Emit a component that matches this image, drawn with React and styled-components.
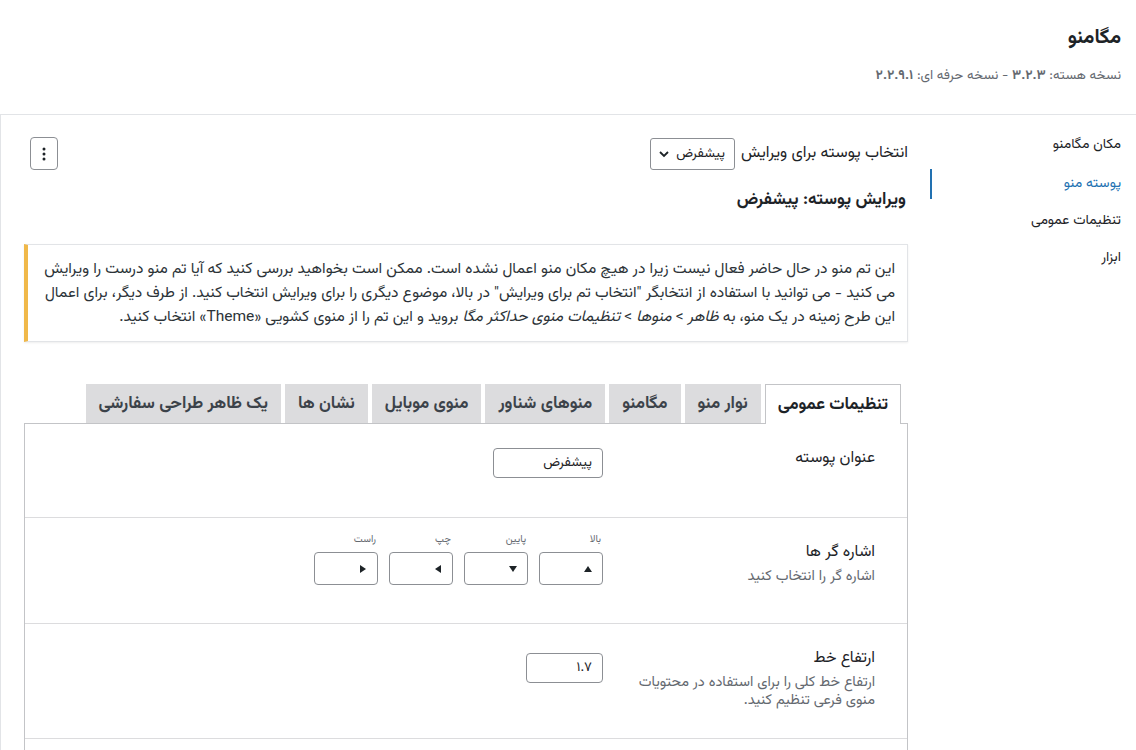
import React from 'react'
import styled, { createGlobalStyle } from 'styled-components'

const GlobalStyle = createGlobalStyle`
    html, body {
        margin: 0;
        padding: 0;
        background: #fff;
    }
    body {
        font-family: "Vazirmatn", "Noto Sans Arabic", "DejaVu Sans", sans-serif;
        color: #1d2327;
        font-size: 14px;
    }
`

const Page = styled.div`
    direction: rtl;
    width: 1136px;
    min-height: 750px;
    overflow: hidden;
`
const Header = styled.header`
    height: 115px;
    box-sizing: border-box;
    padding: 25px 15px 0;
    border-bottom: 1px solid #e2e4e7;
`
const Title = styled.h1`
    margin: 0;
    font-size: 20px;
    line-height: 26px;
    font-weight: 700;
`
const Version = styled.p`
    margin: 15px 0 0;
    font-size: 13.5px;
    line-height: 20px;
    color: #646970;
    b { font-weight: 700; }
`
const Body = styled.div`
    display: flex;
    align-items: stretch;
`
const Sidebar = styled.nav`
    width: 206px;
    flex: none;
    padding-top: 15px;
    box-sizing: border-box;
`
const NavItem = styled.a`
    display: block;
    height: 30px;
    line-height: 30px;
    margin-bottom: ${p => p.$gap || 7}px;
    padding-right: 15px;
    font-size: 14px;
    color: ${p => p.$active ? '#2271b1' : '#1d2327'};
    border-left: 2px solid ${p => p.$active ? '#2271b1' : 'transparent'};
    text-decoration: none;
`
const Content = styled.main`
    flex: 1;
    padding: 22px 22px 0 23px;
    border-left: 1px solid #e2e4e7;
    min-width: 0;
`
const TopBar = styled.div`
    display: flex;
    justify-content: space-between;
    align-items: center;
`
const PickGroup = styled.label`
    display: flex;
    align-items: center;
    gap: 6px;
    font-size: 16px;
`
const Select = styled.div`
    height: 32px;
    box-sizing: border-box;
    border: 1px solid #8c8f94;
    border-radius: 3px;
    display: flex;
    align-items: center;
    gap: 6px;
    padding: 0 9px 0 7px;
    font-size: 13.5px;
`
const MoreButton = styled.button`
    width: 28px;
    height: 33px;
    margin-left: 6px;
    background: #fff;
    border: 1px solid #8c8f94;
    border-radius: 4px;
    display: flex;
    align-items: center;
    justify-content: center;
    padding: 0;
`
const EditTitle = styled.h2`
    margin: 19px 2px 0 0;
    font-size: 17px;
    line-height: 22px;
    font-weight: 700;
`
const Notice = styled.div`
    margin-top: 33px;
    background: #fff;
    border: 1px solid #e2e4e7;
    border-left: 4px solid #f0b849;
    box-shadow: 0 1px 2px rgba(0, 0, 0, 0.07);
    padding: 12px 12px 12px 10px;
    font-size: 15.5px;
    line-height: 24px;
    color: #2c3338;
    p { margin: 0; }
`
const Tabs = styled.div`
    display: flex;
    gap: 4px;
    padding-right: 7px;
    margin-top: 42px;
    position: relative;
    z-index: 1;
`
const Tab = styled.div`
    box-sizing: border-box;
    padding: 0 12px;
    display: flex;
    align-items: center;
    font-size: 17px;
    font-weight: 700;
    border: 1px solid ${p => p.$active ? '#c3c4c7' : '#dcdcde'};
    border-bottom: none;
    background: ${p => p.$active ? '#fff' : '#dcdcde'};
    color: ${p => p.$active ? '#1d2327' : '#3c434a'};
    margin-bottom: -1px;
    height: ${p => p.$active ? 40 : 39}px;
`
const Table = styled.div`
    border: 1px solid #c3c4c7;
    border-bottom: none;
    background: #fff;
`
const Row = styled.div`
    display: grid;
    grid-template-columns: 255px 1fr;
    column-gap: 17px;
    align-items: start;
    height: ${p => p.$h}px;
    box-sizing: border-box;
    padding: 15px 32px 0;
    border-bottom: 1px solid #dcdcde;
`
const LabelCell = styled.div`
    padding-top: 9px;
`
const FieldTitle = styled.div`
    font-size: 16px;
    line-height: 22px;
    font-weight: 400;
`
const FieldDesc = styled.div`
    margin-top: 4px;
    font-size: 14.5px;
    line-height: 18px;
    color: #646970;
`
const Controls = styled.div`
    padding-top: ${p => p.$top || 0}px;
    display: flex;
    gap: 11px;
`
const TextInput = styled.div`
    width: ${p => p.$w}px;
    height: 30px;
    box-sizing: border-box;
    border: 1px solid #8c8f94;
    border-radius: 4px;
    padding: 0 10px;
    font-size: 13.5px;
    line-height: 28px;
`
const ArrowField = styled.div`
    display: flex;
    flex-direction: column;
    gap: 5px;
`
const ArrowLabel = styled.span`
    font-size: 10px;
    line-height: 14px;
    color: #646970;
    padding-right: 2px;
`
const ArrowBox = styled.div`
    width: 64px;
    height: 33px;
    box-sizing: border-box;
    border: 1px solid #8c8f94;
    border-radius: 4px;
    display: flex;
    align-items: center;
    padding-right: 10px;
`

const arrows = [
    { label: 'بالا', d: 'M4 1 L8 7 L0 7 Z' },
    { label: 'پایین', d: 'M0 1 L8 1 L4 7 Z' },
    { label: 'چپ', d: 'M1 4 L7 0 L7 8 Z' },
    { label: 'راست', d: 'M1 0 L7 4 L1 8 Z' },
]

const navItems = ['مکان مگامنو', 'پوسته منو', 'تنظیمات عمومی', 'ابزار']
const tabs = ['تنظیمات عمومی', 'نوار منو', 'مگامنو', 'منوهای شناور', 'منوی موبایل', 'نشان ها', 'یک ظاهر طراحی سفارشی']

export default function App() {
    return (
        <Page>
            <GlobalStyle />
            <Header>
                <Title>مگامنو</Title>
                <Version>نسخه هسته: <b>۳.۲.۳</b> - نسخه حرفه ای: <b>۲.۲.۹.۱</b></Version>
            </Header>
            <Body>
                <Sidebar>
                    {navItems.map((item, i) => (
                        <NavItem key={item} href="#" $active={i === 1} $gap={i === 0 ? 9 : 7}>{item}</NavItem>
                    ))}
                </Sidebar>
                <Content>
                    <TopBar>
                        <PickGroup>
                            انتخاب پوسته برای ویرایش
                            <Select>
                                پیشفرض
                                <svg width="12" height="12" viewBox="0 0 12 12">
                                    <path d="M2 4 L6 8 L10 4" fill="none" stroke="#1d2327" strokeWidth="1.8" />
                                </svg>
                            </Select>
                        </PickGroup>
                        <MoreButton aria-label="more">
                            <svg width="4" height="16" viewBox="0 0 4 16">
                                <circle cx="2" cy="3" r="1.5" fill="#1d2327" />
                                <circle cx="2" cy="8" r="1.5" fill="#1d2327" />
                                <circle cx="2" cy="13" r="1.5" fill="#1d2327" />
                            </svg>
                        </MoreButton>
                    </TopBar>
                    <EditTitle>ویرایش پوسته: پیشفرض</EditTitle>
                    <Notice>
                        <p>
                            این تم منو در حال حاضر فعال نیست زیرا در هیچ مکان منو اعمال نشده است. ممکن است بخواهید بررسی کنید که آیا تم منو درست را ویرایش می کنید - می توانید با استفاده از انتخابگر "انتخاب تم برای ویرایش" در بالا، موضوع دیگری را برای ویرایش انتخاب کنید. از طرف دیگر، برای اعمال این طرح زمینه در یک منو، به <em>ظاهر</em> &gt; <em>منوها</em> &gt; <em>تنظیمات منوی حداکثر مگا</em> بروید و این تم را از منوی کشویی «Theme» انتخاب کنید.
                        </p>
                    </Notice>
                    <Tabs>
                        {tabs.map((t, i) => <Tab key={t} $active={i === 0}>{t}</Tab>)}
                    </Tabs>
                    <Table>
                        <Row $h={94}>
                            <LabelCell>
                                <FieldTitle>عنوان پوسته</FieldTitle>
                            </LabelCell>
                            <Controls $top={9}>
                                <TextInput $w={110}>پیشفرض</TextInput>
                            </Controls>
                        </Row>
                        <Row $h={106}>
                            <LabelCell>
                                <FieldTitle>اشاره گر ها</FieldTitle>
                                <FieldDesc>اشاره گر را انتخاب کنید</FieldDesc>
                            </LabelCell>
                            <Controls>
                                {arrows.map(a => (
                                    <ArrowField key={a.label}>
                                        <ArrowLabel>{a.label}</ArrowLabel>
                                        <ArrowBox>
                                            <svg width="8" height="8" viewBox="0 0 8 8">
                                                <path d={a.d} fill="#1d2327" />
                                            </svg>
                                        </ArrowBox>
                                    </ArrowField>
                                ))}
                            </Controls>
                        </Row>
                        <Row $h={115}>
                            <LabelCell>
                                <FieldTitle>ارتفاع خط</FieldTitle>
                                <FieldDesc>ارتفاع خط کلی را برای استفاده در محتویات منوی فرعی تنظیم کنید.</FieldDesc>
                            </LabelCell>
                            <Controls $top={14}>
                                <TextInput $w={77}>۱.۷</TextInput>
                            </Controls>
                        </Row>
                        <Row $h={40} />
                    </Table>
                </Content>
            </Body>
        </Page>
    )
}
